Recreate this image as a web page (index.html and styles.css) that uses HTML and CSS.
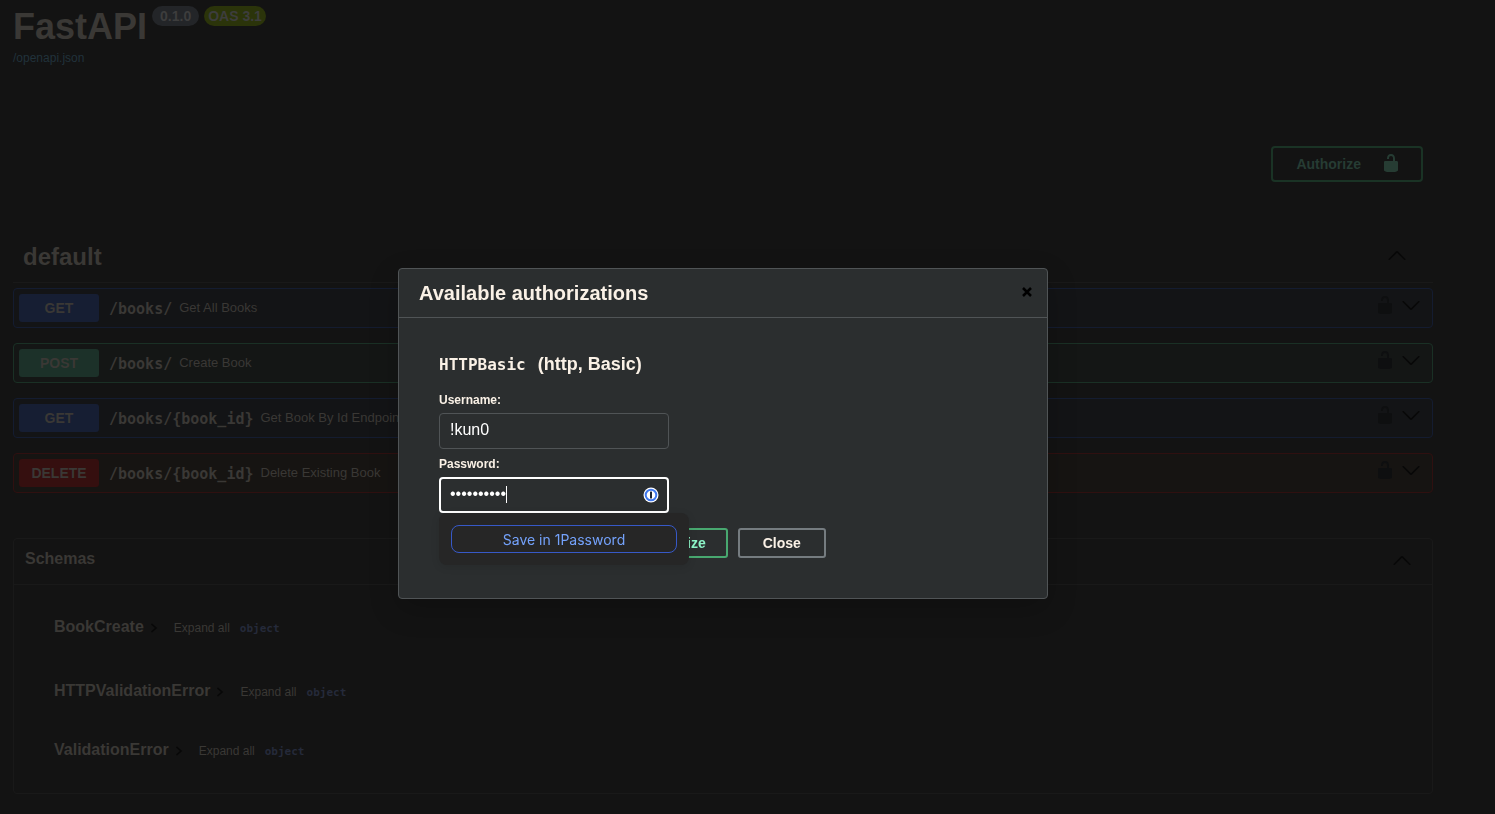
FILE: index.html
```html
<!DOCTYPE html>
<html lang="en">
<head>
<meta charset="utf-8">
<meta name="viewport" content="width=device-width, initial-scale=1">
<title>FastAPI - Swagger UI</title>
<link rel="stylesheet" href="styles.css">
</head>
<body>
<svg width="0" height="0" class="sprite" aria-hidden="true">
  <symbol id="unlocked" viewBox="0 0 20 20"><path d="M15.8 8H14V5.6C14 2.703 12.665 1 10 1 7.334 1 6 2.703 6 5.6V6h2v-.801C8 3.754 8.797 3 10 3c1.203 0 2 .754 2 2.199V8H4c-.553 0-1 .646-1 1.199V17c0 .549.428 1.139.951 1.307l1.197.387C5.672 18.861 6.55 19 7.1 19h5.8c.549 0 1.428-.139 1.951-.307l1.196-.387c.524-.167.953-.757.953-1.306V9.199C17 8.646 16.352 8 15.8 8z"/></symbol>
  <symbol id="arrow-up" viewBox="0 0 20 20"><path d="M17.418 14.908c.272.27.701.27.979 0s.271-.701 0-.969L10.49 6.109c-.271-.268-.709-.268-.979 0L1.604 13.94c-.271.268-.271.701 0 .969.278.27.707.27.979 0L10 7.767l7.418 7.141z"/></symbol>
  <symbol id="arrow-down" viewBox="0 0 20 20"><path d="M17.418 6.109c.272-.268.709-.268.979 0s.271.701 0 .969l-7.908 7.83c-.27.268-.707.268-.979 0l-7.908-7.83c-.27-.268-.27-.701 0-.969.271-.268.709-.268.979 0L10 13.25l7.418-7.141z"/></symbol>
  <symbol id="chevron" viewBox="0 0 8 10"><path d="M1.5 1l4.500 4-4.500 4" fill="none" stroke="currentColor" stroke-width="1.600"/></symbol>
</svg>

<main class="page">
  <header class="info">
    <h1 class="title">FastAPI</h1>
    <span class="badge">0.1.0</span>
    <span class="badge badge-oas">OAS 3.1</span>
  </header>
  <a class="spec-link" href="/openapi.json">/openapi.json</a>

  <div class="scheme">
    <button class="authorize" type="button">Authorize <svg class="icon"><use href="#unlocked"/></svg></button>
  </div>

  <section class="tag">
    <h2 class="tag-title">default <button class="icon-button" type="button" aria-label="Collapse default"><svg class="icon"><use href="#arrow-up"/></svg></button></h2>
    <div class="operations">
      <div class="op get">
        <span class="method">GET</span><code class="path">/books/</code><span class="summary">Get All Books</span>
        <button class="icon-button lock" type="button" aria-label="Authorization"><svg class="icon"><use href="#unlocked"/></svg></button>
        <button class="icon-button" type="button" aria-label="Expand"><svg class="icon"><use href="#arrow-down"/></svg></button>
      </div>
      <div class="op post">
        <span class="method">POST</span><code class="path">/books/</code><span class="summary">Create Book</span>
        <button class="icon-button lock" type="button" aria-label="Authorization"><svg class="icon"><use href="#unlocked"/></svg></button>
        <button class="icon-button" type="button" aria-label="Expand"><svg class="icon"><use href="#arrow-down"/></svg></button>
      </div>
      <div class="op get">
        <span class="method">GET</span><code class="path">/books/{book_id}</code><span class="summary">Get Book By Id Endpoint</span>
        <button class="icon-button lock" type="button" aria-label="Authorization"><svg class="icon"><use href="#unlocked"/></svg></button>
        <button class="icon-button" type="button" aria-label="Expand"><svg class="icon"><use href="#arrow-down"/></svg></button>
      </div>
      <div class="op delete">
        <span class="method">DELETE</span><code class="path">/books/{book_id}</code><span class="summary">Delete Existing Book</span>
        <button class="icon-button lock" type="button" aria-label="Authorization"><svg class="icon"><use href="#unlocked"/></svg></button>
        <button class="icon-button" type="button" aria-label="Expand"><svg class="icon"><use href="#arrow-down"/></svg></button>
      </div>
    </div>
  </section>

  <section class="schemas">
    <h3 class="schemas-title">Schemas <button class="icon-button" type="button" aria-label="Collapse schemas"><svg class="icon"><use href="#arrow-up"/></svg></button></h3>
    <ul class="models">
      <li class="model model-first"><span class="model-name">BookCreate</span><svg class="chevron"><use href="#chevron"/></svg><button class="expand" type="button">Expand all</button><code class="type">object</code></li>
      <li class="model"><span class="model-name">HTTPValidationError</span><svg class="chevron"><use href="#chevron"/></svg><button class="expand" type="button">Expand all</button><code class="type">object</code></li>
      <li class="model"><span class="model-name">ValidationError</span><svg class="chevron"><use href="#chevron"/></svg><button class="expand" type="button">Expand all</button><code class="type">object</code></li>
    </ul>
  </section>
</main>

<div class="overlay">
  <div class="modal" role="dialog" aria-labelledby="modal-title">
    <div class="modal-header">
      <h3 class="modal-title" id="modal-title">Available authorizations</h3>
      <button class="modal-close" type="button" aria-label="Close dialog"><svg class="cross" viewBox="0 0 10 10"><path d="M1 1l8 8M9 1l-8 8"/></svg></button>
    </div>
    <form class="modal-body">
      <h4 class="auth-name"><code class="auth-code">HTTPBasic</code>(http, Basic)</h4>
      <label class="label" for="username">Username:</label>
      <input class="input" id="username" type="text" value="!kun0">
      <label class="label" for="password">Password:</label>
      <div class="password">
        <input class="input input-focus" id="password" type="password" value="abcdefghij">
        <span class="caret"></span>
        <svg class="onepassword" viewBox="0 0 16 16"><circle cx="8" cy="8" r="7.500" fill="#fff"/><circle cx="8" cy="8" r="5.300" fill="#fff" stroke="#3f78ee" stroke-width="2"/><rect x="7" y="4.600" width="2" height="6.800" rx=".5" fill="#1c2433"/></svg>
        <div class="popup"><button class="save" type="button">Save in 1Password</button></div>
      </div>
      <div class="actions">
        <button class="btn btn-authorize" type="submit">Authorize</button>
        <button class="btn" type="button">Close</button>
      </div>
    </form>
  </div>
</div>
</body>
</html>
```
FILE: styles.css
```css
* { box-sizing: border-box; }

body {
  margin: 0;
  background: #131313;
  color: #3a3835;
  font-family: "Liberation Sans", Arial, sans-serif;
}

button {
  font-family: inherit;
  color: inherit;
  background: none;
  border: 0;
  padding: 0;
}

h1, h2, h3, h4, ul { margin: 0; padding: 0; }

.sprite { position: absolute; }

.page { padding: 6px 62px 20px 13px; }

.info { display: flex; align-items: flex-start; gap: 5px; }

.title { font-size: 36px; line-height: 42px; }

.badge {
  padding: 0 8px;
  border-radius: 10px;
  background: #232528;
  color: #3d3d3d;
  font-size: 14px;
  font-weight: 700;
  line-height: 20px;
}

.badge-oas { padding: 0 4px; background: #2b340a; }

.spec-link {
  display: block;
  color: #21323b;
  font-size: 12px;
  line-height: 20px;
  text-decoration: none;
}

.scheme { display: flex; justify-content: flex-end; padding: 78px 10px 0; }

.authorize {
  display: flex;
  align-items: center;
  gap: 20px;
  height: 36px;
  padding: 0 20px 0 23px;
  border: 2px solid #1a3325;
  border-radius: 4px;
  color: #263c33;
  font-size: 14px;
  font-weight: 700;
}

.authorize .icon { margin-bottom: 2px; }

.icon { display: block; width: 20px; height: 20px; fill: currentColor; }

.icon-button { color: #080808; }

.lock { color: #0e0f10; }

.tag { padding-top: 48px; }

.tag-title {
  display: flex;
  justify-content: space-between;
  align-items: center;
  height: 53px;
  padding: 2px 26px 0 10px;
  border-bottom: 1px solid #191919;
  font-size: 24px;
}

.tag-title .icon-button { padding-bottom: 4px; }

.operations { display: grid; gap: 15px; padding-top: 5px; }

.op {
  display: flex;
  align-items: center;
  height: 40px;
  padding: 0 11px 0 5px;
  border: 1px solid;
  border-radius: 4px;
}

.get { background: #131416; border-color: #141c30; }
.post { background: #141615; border-color: #1a3025; }
.delete { background: #161412; border-color: #2f1010; }

.method {
  width: 80px;
  border-radius: 3px;
  font-size: 14px;
  font-weight: 700;
  line-height: 28px;
  text-align: center;
}

.get .method { background: #161e33; }
.post .method { background: #1c3129; }
.delete .method { background: #350f0f; }

.path {
  padding: 2px 7px 0 10px;
  font-family: "DejaVu Sans Mono", monospace;
  font-size: 15px;
  font-weight: 700;
}

.summary { flex: 1; padding-bottom: 2px; font-size: 13px; }

.op .lock { margin-right: 6px; }

.op .icon-button { padding-bottom: 6px; }

.schemas {
  margin-top: 45px;
  border: 1px solid #191919;
  border-radius: 4px;
}

.schemas-title {
  display: flex;
  justify-content: space-between;
  align-items: center;
  height: 46px;
  padding: 0 20px 6px 11px;
  border-bottom: 1px solid #191919;
  font-size: 16px;
}

.schemas-title .icon-button { padding-top: 2px; }

.models { padding: 32px 40px 33px; list-style: none; }

.model { display: flex; align-items: center; height: 20px; margin-bottom: 39px; }

.model-first { margin-bottom: 44px; }

.model:last-child { margin-bottom: 0; }

.model-name { font-size: 16px; font-weight: 700; }

.chevron { width: 8px; height: 10px; margin: 2px 16px 0 6px; color: #080808; }

.expand { padding-top: 2px; margin-right: 10px; font-size: 12px; }

.type {
  padding-top: 2px;
  color: #252a3a;
  font-family: "DejaVu Sans Mono", monospace;
  font-size: 11px;
  font-weight: 700;
}

.overlay {
  position: fixed;
  inset: 0;
  display: flex;
  align-items: center;
  justify-content: center;
  padding: 53px 49px 0 0;
}

.modal {
  width: 100%;
  max-width: 650px;
  border: 1px solid #505456;
  border-radius: 4px;
  background: #2b2e2f;
  color: #faf1e6;
  box-shadow: 0 10px 30px rgba(0, 0, 0, .2);
}

.modal-header {
  display: flex;
  justify-content: space-between;
  align-items: center;
  height: 49px;
  padding: 0 15px 2px 20px;
  border-bottom: 1px solid #505456;
}

.modal-title { padding-top: 2px; font-size: 20px; }

.cross { display: block; width: 10px; height: 10px; fill: none; stroke: #000; stroke-width: 2.5; }

.modal-body { padding: 35px 40px 40px; }

.auth-name { margin-bottom: 14px; font-size: 18px; line-height: 22px; }

.auth-code {
  margin-right: 12px;
  font-family: "DejaVu Sans Mono", monospace;
  font-size: 16px;
}

.label { display: block; font-size: 12px; font-weight: 700; line-height: 20px; }

.input {
  display: block;
  width: 230px;
  height: 36px;
  margin: 3px 0 5px;
  padding: 0 10px 2px;
  border: 1px solid #505456;
  border-radius: 4px;
  outline: 0;
  background: #2b2e2f;
  color: #fff;
  font-family: inherit;
  font-size: 16px;
}

.input-focus { padding: 0 9px 2px; border: 2px solid #fff; }

.password { position: relative; width: 230px; }

.caret { position: absolute; left: 67px; top: 9px; width: 1px; height: 17px; background: #fff; }

.onepassword { position: absolute; right: 10px; top: 10px; width: 16px; height: 16px; }

.popup {
  position: absolute;
  left: 0;
  top: 36px;
  width: 250px;
  padding: 12px;
  border-radius: 8px;
  background: #262626;
  box-shadow: 0 2px 8px rgba(0, 0, 0, .1);
}

.save {
  display: block;
  width: 100%;
  height: 28px;
  border: 1px solid #3759c8;
  border-radius: 8px;
  color: #74a2fb;
  font-family: Inter, sans-serif;
  font-size: 14px;
}

.actions { display: flex; justify-content: center; gap: 10px; padding: 10px 7px 0 0; }

.btn {
  height: 30px;
  padding: 0 23px;
  border: 2px solid #757c80;
  border-radius: 3px;
  font-size: 14px;
  font-weight: 700;
}

.btn-authorize { padding: 0 20px; border-color: #48a870; color: #8df5c8; }

.actions { padding-right: 1px; }
```
